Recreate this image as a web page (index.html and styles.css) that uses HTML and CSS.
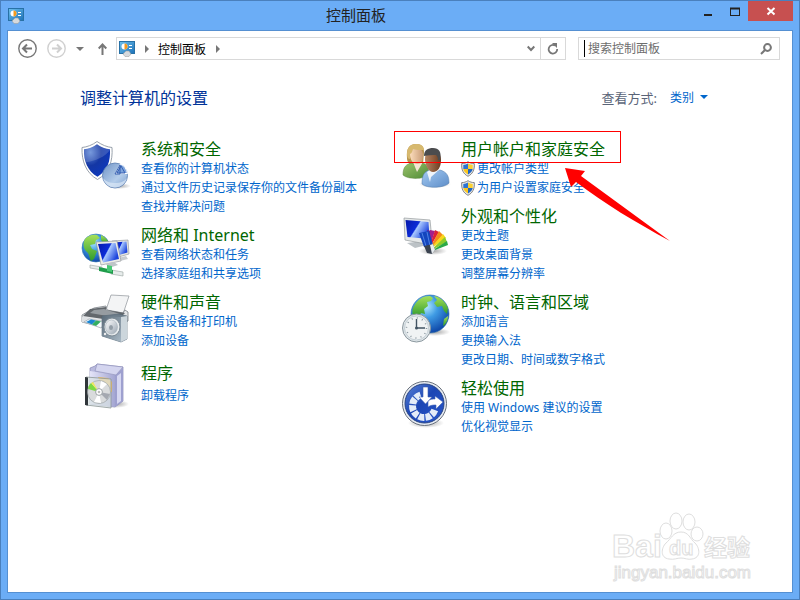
FILE: index.html
```html
<!DOCTYPE html>
<html lang="zh-CN">
<head>
  <meta charset="UTF-8">
  <title>控制面板</title>
  <meta name="viewport" content="width=device-width, initial-scale=1">
  <link rel="stylesheet" href="styles.css">
</head>
<body>
  <!-- shared gradients and symbols -->
  <svg class="defs" width="0" height="0" aria-hidden="true">
    <defs>
      <linearGradient id="silver" x1="0" y1="0" x2="1" y2="1"><stop offset="0" stop-color="#fff"/><stop offset="1" stop-color="#9aa6b2"/></linearGradient>
      <linearGradient id="blue" x1="0" y1="0" x2="1" y2="1"><stop offset="0" stop-color="#5c84d8"/><stop offset=".45" stop-color="#1c46b4"/><stop offset="1" stop-color="#2a58cc"/></linearGradient>
      <radialGradient id="guard" cx=".25" cy=".25" r=".9"><stop offset="0" stop-color="#5d86d6"/><stop offset=".45" stop-color="#1437a4"/><stop offset="1" stop-color="#0c38c0"/></radialGradient>
      <linearGradient id="screen" x1="0" y1="0" x2="1" y2=".5"><stop offset="0" stop-color="#0718a8"/><stop offset=".5" stop-color="#0c2bd8"/><stop offset=".55" stop-color="#a9c8ff"/><stop offset="1" stop-color="#1c44dc"/></linearGradient>
      <radialGradient id="globe" cx=".4" cy=".3" r=".75"><stop offset="0" stop-color="#b5ecff"/><stop offset=".4" stop-color="#3f9be4"/><stop offset="1" stop-color="#0a3fa2"/></radialGradient>
      <linearGradient id="land" x1="0" y1="0" x2="0" y2="1"><stop offset="0" stop-color="#a6e05a"/><stop offset="1" stop-color="#2f9b2d"/></linearGradient>
      <linearGradient id="pie" x1="0" y1="0" x2="1" y2="1"><stop offset="0" stop-color="#6f93c6"/><stop offset=".6" stop-color="#b4cdea"/><stop offset="1" stop-color="#7d9fce"/></linearGradient>
      <linearGradient id="steel" x1="0" y1="0" x2="1" y2="1"><stop offset="0" stop-color="#5a6b79"/><stop offset="1" stop-color="#a9b9c5"/></linearGradient>
      <linearGradient id="violet" x1="0" y1="0" x2="1" y2="0"><stop offset="0" stop-color="#e4e4f8"/><stop offset="1" stop-color="#a4a6d2"/></linearGradient>
      <linearGradient id="panel" x1="0" y1="0" x2="1" y2="1"><stop offset="0" stop-color="#6ec1ee"/><stop offset="1" stop-color="#1c71b8"/></linearGradient>
      <radialGradient id="shade"><stop offset="0" stop-color="#000" stop-opacity=".35"/><stop offset="1" stop-color="#000" stop-opacity="0"/></radialGradient>
    </defs>
    <symbol id="cp" viewBox="0 0 16 16">
      <rect x=".5" y=".5" width="15" height="12" fill="url(#panel)" stroke="#2871a6"/>
      <circle cx="5.500" cy="5.500" r="3" fill="#fff"/><path d="M5.500 5.500v-3a3 3 0 0 1 0 6z" fill="#f59a1d"/>
      <path d="M10 4.500h3M10 7.500h3" stroke="#fff"/>
      <path d="M4 13l3-3h3l2 3-2 2.500H6z" fill="#d6d9dc" stroke="#999" stroke-width=".5"/>
    </symbol>
    <symbol id="uac" viewBox="0 0 14 16">
      <path d="M7 .7C9 2 11 2.600 13.300 2.600 13.800 9 11.500 13 7 15.300 2.500 13 .2 9 .7 2.600 3 2.600 5 2 7 .7z" fill="#e8e8e8" stroke="#777" stroke-width=".9"/>
      <path d="M7 2.500C5.500 3.400 4 3.900 2.300 4v4H7z" fill="#2c74d4"/>
      <path d="M7 2.500C8.500 3.400 10 3.900 11.700 4v4H7z" fill="#fbd132"/>
      <path d="M2.300 8H7v5.600C4.300 12 2.700 10.300 2.300 8z" fill="#fbc61f"/>
      <path d="M11.700 8H7v5.600c2.700-1.600 4.300-3.300 4.700-5.600z" fill="#2266c2"/>
    </symbol>
  </svg>

  <div class="window">
    <header class="titlebar">
      <svg class="icon-16" aria-hidden="true"><use href="#cp"/></svg>
      <h1 class="title">控制面板</h1>
      <div class="controls">
        <button type="button" aria-label="最小化"><svg width="8" height="12"><path d="M0 10h8" stroke="#222" stroke-width="2"/></svg></button>
        <button type="button" aria-label="最大化"><svg width="10" height="12"><path d="M0 3.500h10" stroke="#222" stroke-width="2"/><rect x=".5" y="3.500" width="9" height="7" fill="none" stroke="#222"/></svg></button>
        <button type="button" class="close" aria-label="关闭"><svg width="10" height="12"><path d="M1.500 3l7 6.500m0-6.500l-7 6.500" stroke="#fff" stroke-width="2"/></svg></button>
      </div>
    </header>

    <main class="client">
      <nav class="toolbar">
        <button type="button" class="round" aria-label="后退"><svg width="19" height="19" fill="none" stroke="#777"><circle cx="9.500" cy="9.500" r="8.700" stroke-width="1.400"/><path d="M5.500 9.500H14M9 5.500l-4 4 4 4" stroke-width="2"/></svg></button>
        <button type="button" class="round" aria-label="前进"><svg width="19" height="19" fill="none" stroke="#d0d0d0"><circle cx="9.500" cy="9.500" r="8.700" stroke-width="1.400"/><path d="M13.500 9.500H5M10 5.500l4 4-4 4" stroke-width="2"/></svg></button>
        <button type="button" class="recent" aria-label="最近浏览的位置"><svg width="8" height="4"><path d="M0 0h8L4 4z" fill="#777"/></svg></button>
        <button type="button" class="up" aria-label="上移"><svg width="9" height="12" fill="none" stroke="#777" stroke-width="2"><path d="M4.500 12V1.500M.7 5.500l3.800-4 3.800 4"/></svg></button>
        <div class="address">
          <svg class="icon-16" aria-hidden="true"><use href="#cp"/></svg>
          <svg class="crumb" width="4" height="8"><path d="M0 0l4 4-4 4z" fill="#777"/></svg>
          <a href="#">控制面板</a>
          <svg class="crumb" width="4" height="8"><path d="M0 0l4 4-4 4z" fill="#777"/></svg>
          <button type="button" class="history" aria-label="以前的位置"><svg width="8" height="7" fill="none" stroke="#777" stroke-width="2"><path d="M.7 1.500L4 5l3.300-3.500"/></svg></button>
          <button type="button" class="refresh" aria-label="刷新"><svg width="12" height="12"><path d="M8 2.500A4.300 4.300 0 1 0 10.200 6" fill="none" stroke="#777" stroke-width="1.800"/><path d="M5 0h5v5z" fill="#777"/></svg></button>
        </div>
        <form class="search">
          <span class="cursor"></span>
          <input type="text" aria-label="搜索控制面板" placeholder="搜索控制面板">
          <button type="button" aria-label="搜索"><svg width="12" height="12" fill="none" stroke="#777" stroke-width="2"><circle cx="7.500" cy="4.500" r="3.400"/><path d="M5 7L1 11"/></svg></button>
        </form>
      </nav>

      <div class="heading">
        <h2>调整计算机的设置</h2>
        <span id="view-label">查看方式:</span>
        <button type="button" class="view" aria-describedby="view-label">类别 <svg width="8" height="4"><path d="M0 0h8L4 4z" fill="#0066cc"/></svg></button>
      </div>

      <div class="categories">
        <div class="column">
          <section class="category">
            <svg class="icon" viewBox="0 0 48 48" aria-hidden="true">
              <ellipse cx="38" cy="45" rx="12" ry="3" fill="url(#shade)"/>
              <path d="M16 .5C21 4 26 6 31 6.500 32 20 28 32 16.500 38.500 5 32 .5 20 1 6.500 6 6 11.500 4 16 .5z" fill="#fff" stroke="#8f97a3" stroke-width=".9"/>
              <path d="M16 3.200C20 6 24.500 8 29 8.300c.5 12-2.500 21.500-12.500 27.500C6.500 30 2.500 20 3 8.300 7.500 8 12 6 16 3.200z" fill="url(#guard)"/>
              <path d="M16 3.200C12 6 7.500 8 3 8.300c0 5 .5 9.300 2 13C14 20 24 16 29 9v-.7C24.500 8 20 6 16 3.200z" fill="#fff" opacity=".16"/>
              <circle cx="34" cy="34.500" r="12.500" fill="url(#pie)" stroke="#5b7db0" stroke-width=".8"/>
              <path d="M22 37c1 5 6 9.500 12 9.500S45 42 46 37c-3 4-7 5-12 5s-9-1-12-5z" fill="#dbe8f7" opacity=".7"/>
              <path d="M34.500 32.500l5-9.500c4 1.500 6 5 7 9.500z" fill="#7fa5dd" stroke="#fff" stroke-width="1"/>
              <path d="M34 33l5-9v9zM36 32l4-7 4 7z" fill="none" stroke="#2b56ac" stroke-width=".9"/>
            </svg>
            <div class="links">
              <h3><a href="#">系统和安全</a></h3>
              <a href="#">查看你的计算机状态</a>
              <a href="#">通过文件历史记录保存你的文件备份副本</a>
              <a href="#">查找并解决问题</a>
            </div>
          </section>

          <section class="category">
            <svg class="icon" viewBox="0 0 48 48" aria-hidden="true">
              <circle cx="15" cy="21" r="14" fill="url(#globe)" stroke="#3177ae" stroke-width=".6"/>
              <path d="M4 12c3-3 7-5 12-4l3 3-4 2-1 4-5 1 2 4 5 2-3 8-3 2c-2-3-1-6-4-9-3-2-5-7-2-13z" fill="url(#land)"/>
              <path d="M20 8c4 2 6 4 8 8l-5 1-3-4z" fill="url(#land)"/>
              <path d="M31 14l16-1 1 14-14 4z" fill="#e6e6e0" stroke="#8a8f96" stroke-width=".6"/>
              <path d="M32.500 15.500l13-1 1 11-12 3.500z" fill="url(#screen)"/>
              <path d="M37 31l8-2 2 3-8 2z" fill="#c8ccd0"/>
              <path d="M15 15l21-1 4 20-20 4z" fill="#ecece6" stroke="#8a8f96" stroke-width=".6"/>
              <path d="M17 17l17.500-1L38 32l-16 3.500z" fill="url(#screen)"/>
              <path d="M25 37l8-2 4 3-9 3z" fill="#bfc5c8"/>
              <path d="M9 38l12 2v3L9 41zM30 43l12 2v4l-12-2z" fill="#e7eceb" stroke="#97a3a0" stroke-width=".6"/>
              <path d="M18 40l14 3v4l-14-3z" fill="#1f9c4b"/><path d="M26 38l5 1v6l-5-1z" fill="#48c875"/>
            </svg>
            <div class="links">
              <h3><a href="#">网络和 Internet</a></h3>
              <a href="#">查看网络状态和任务</a>
              <a href="#">选择家庭组和共享选项</a>
            </div>
          </section>

          <section class="category">
            <svg class="icon" viewBox="0 0 48 48" aria-hidden="true">
              <path d="M30 1l18 1-6 18-17-4z" fill="#f3f4f5" stroke="#9ba0a4" stroke-width=".8"/>
              <path d="M13 14l12-2 1 4 16 3 2-3 3 2v9L25 34 1 28v-7z" fill="#e4e6e8" stroke="#777e84" stroke-width=".8"/>
              <path d="M9 15l16-2v3l19 3-8 8L2 22z" fill="#62676c"/>
              <path d="M13 16l10-1 16 5-7 3-23-4z" fill="#969ca1"/>
              <path d="M1 23l29 4-8 7-21-6z" fill="#dfe2e5"/>
              <path d="M3 28l5-3 17 3-5 6z" fill="#f7fbff" stroke="#8d979f" stroke-width=".6"/>
              <path d="M5 28l5-2.500 5 1-4 4z" fill="#1b86d2"/><path d="M11 30.500l4-4 5 1-5 4.500z" fill="#33ad62"/>
              <path d="M21 22l17-2 8 2v23l-6 3-19-6z" fill="#6d7d8a" stroke="#526473" stroke-width=".6"/>
              <path d="M21 22l19 1v25l-19-6z" fill="url(#steel)"/><path d="M40 23l6-1v23l-6 3z" fill="#ccd6dc"/>
              <ellipse cx="31" cy="33" rx="8" ry="9" fill="#e9edef" stroke="#7f8c96"/>
              <ellipse cx="30.500" cy="33" rx="6" ry="7" fill="url(#silver)" stroke="#a6b2ba" stroke-width=".6"/>
              <ellipse cx="30" cy="33.500" rx="2" ry="2.500" fill="#929da6"/>
              <circle cx="24" cy="40" r="1.200" fill="#eee"/>
            </svg>
            <div class="links">
              <h3><a href="#">硬件和声音</a></h3>
              <a href="#">查看设备和打印机</a>
              <a href="#">添加设备</a>
            </div>
          </section>

          <section class="category">
            <svg class="icon" viewBox="0 0 48 48" aria-hidden="true">
              <ellipse cx="35" cy="43" rx="13" ry="4" fill="url(#shade)"/>
              <path d="M9 7l5-2 2-2 26 3v34l-8 6-25-3z" fill="#b9bade" stroke="#8788b4" stroke-width=".7"/>
              <path d="M9 10l25 4v32L9 43z" fill="url(#violet)"/><path d="M34 14l8-7v33l-8 6z" fill="#9ea0cf"/>
              <path d="M36 15l4-3v28l-4 3z" fill="#d6d7f1"/>
              <path d="M16 3l26 3-7 8-21-4z" fill="#d4d5ef" stroke="#9495bd" stroke-width=".7"/>
              <path d="M17 16l10 1 4 4v10l-8 1z" fill="#f3c05f"/>
              <path d="M5 16l25 2v29L5 44z" fill="#d9e3e2" fill-opacity=".7" stroke="#8b9696" stroke-width=".8"/>
              <path d="M4 16l3 .500v28L4 44z" fill="#30363a"/>
              <circle cx="18" cy="31" r="11.500" fill="#d9dbdc" stroke="#929a9d" stroke-width=".6"/>
              <path d="M18 31L7 28c0-3 2-5 3-6z" fill="#7cda45"/><path d="M18 31l-8-9 2-1z" fill="#f0e85c"/>
              <path d="M18 31l2-11 6 3zM18 31l-5 10 7 1z" fill="#fff"/><path d="M18 31l11 2-3 6z" fill="#a4a8b0"/>
              <circle cx="18" cy="31" r="3.400" fill="#fff" stroke="#9ba1a4"/><circle cx="18" cy="31" r="1.300" fill="#bbb"/>
            </svg>
            <div class="links">
              <h3><a href="#">程序</a></h3>
              <a href="#">卸载程序</a>
            </div>
          </section>
        </div>

        <div class="column">
          <section class="category">
            <svg class="icon" viewBox="0 0 48 48" aria-hidden="true">
              <defs>
                <linearGradient id="green" x1="0" y1="0" x2="1" y2="1"><stop offset="0" stop-color="#9cc46c"/><stop offset="1" stop-color="#4f8b36"/></linearGradient>
                <linearGradient id="shirt" x1="0" y1="0" x2="1" y2="1"><stop offset="0" stop-color="#a4caf2"/><stop offset="1" stop-color="#5d8dc8"/></linearGradient>
                <linearGradient id="fair" x1="0" y1="0" x2="1" y2="0"><stop offset="0" stop-color="#fbdcbb"/><stop offset="1" stop-color="#c99c77"/></linearGradient>
                <linearGradient id="tan" x1="0" y1="0" x2="1" y2="0"><stop offset="0" stop-color="#b58563"/><stop offset="1" stop-color="#6b3c20"/></linearGradient>
              </defs>
              <ellipse cx="34" cy="43" rx="16" ry="4" fill="url(#shade)"/>
              <path d="M6 17C5 8 8 3 15 3c6 0 8 3 8 8l-1 12-10 1C7 23 6 20 6 17z" fill="#b8934d"/>
              <path d="M2 34c0-8 3-11 9-12l5 3 6-3c5 2 6 6 6 12-4 4-21 5-26 0z" fill="url(#green)" stroke="#5a843d" stroke-width=".5"/>
              <path d="M12 21l4 10 6-10z" fill="#f3e5d2"/>
              <path d="M9 13c0-4 2-6 6-6s7 2 7 7c0 6-2 9-6 9s-7-4-7-10z" fill="url(#fair)"/>
              <path d="M6 13c0-7 4-10 9-10 5 0 8 2 8 6-5 0-8 0-11-1-1 3-1 4-3 5v5c-2 0-3-2-3-5z" fill="#d7b96f"/>
              <path d="M21 43c0-9 2-13 9-14l4 2 5-2c7 2 9 6 9 13-4 5-22 6-27 1z" fill="url(#shirt)" stroke="#4e78a8" stroke-width=".5"/>
              <path d="M26 31l3 10 1-5 8-7-8-1z" fill="#eef4fa"/>
              <path d="M24 18c0-6 3-8 8-8s8 3 8 9c0 7-3 12-8 12-4 0-8-6-8-13z" fill="url(#tan)"/>
              <path d="M23 15c0-6 4-8 9-8 6 0 9 4 7 12h-2c0-3-1-4-2-5-4 0-8 0-12 1z" fill="#4b4c4e"/>
            </svg>
            <div class="links">
              <h3><a href="#">用户帐户和家庭安全</a></h3>
              <a href="#" class="admin"><svg width="14" height="16" aria-hidden="true"><use href="#uac"/></svg>更改帐户类型</a>
              <a href="#" class="admin"><svg width="14" height="16" aria-hidden="true"><use href="#uac"/></svg>为用户设置家庭安全</a>
            </div>
            <div class="highlight"></div>
            <svg class="arrow" width="106" height="75" viewBox="0 0 106 75" aria-hidden="true"><path d="M0 0l20 3-4 5 89 65C70 54 40 36 11 14l-5 5z" fill="#f00"/></svg>
          </section>

          <section class="category">
            <svg class="icon" viewBox="0 0 48 48" aria-hidden="true">
              <ellipse cx="32" cy="43" rx="14" ry="4" fill="url(#shade)"/>
              <path d="M6 35l16-2 4 4-12 3z" fill="#bcc2c6"/>
              <path d="M3 10l26 2 2 20-6 4-21-4z" fill="#e5e8e8" stroke="#959b9e" stroke-width=".7"/>
              <path d="M4.500 12l23 2 1 17-22-2z" fill="url(#screen)"/>
              <path d="M28 40l-2-18 4 1z" fill="#731f8d"/>
              <path d="M28 41l1-19 5 1z" fill="#a31f8b"/><path d="M28 41l6-19 4 2z" fill="#dd2038"/>
              <path d="M28 42l10-19 4 4z" fill="#f5891b"/><path d="M28 42l14-16 3 4z" fill="#f7d61c"/>
              <path d="M29 43l15-14 2 5z" fill="#8dcc2b"/><path d="M29 44l17-11 1 4z" fill="#2ca948"/>
              <path d="M18 25l10-2 4 14-9 2z" fill="#1445bd"/><path d="M21 25l4 13m1-14l3 14" stroke="#5c92f0" stroke-width=".8"/>
              <path d="M23 38l9-2 2 6-3 4-5-1z" fill="#3b4350"/><path d="M29 37l3-1 2 6-3 4z" fill="#e9eef1"/>
            </svg>
            <div class="links">
              <h3><a href="#">外观和个性化</a></h3>
              <a href="#">更改主题</a>
              <a href="#">更改桌面背景</a>
              <a href="#">调整屏幕分辨率</a>
            </div>
          </section>

          <section class="category">
            <svg class="icon" viewBox="0 0 48 48" aria-hidden="true">
              <ellipse cx="34" cy="38" rx="15" ry="4" fill="url(#shade)"/>
              <circle cx="29" cy="20" r="19" fill="url(#globe)" stroke="#2769a8" stroke-width=".6"/>
              <path d="M13 12c4-7 9-10 16-10l3 2-2 3-4 1 1 4-4 3 1 5-4-1-2 4-6-1c-1-4-1-7 1-10z" fill="url(#land)"/>
              <path d="M33 2c6 1 11 5 14 12l-1 6-3-3-2-5-5 1-3-4 3-3z" fill="url(#land)"/>
              <path d="M43 25l4-3c0 5-3 9-5 10z" fill="url(#land)"/>
              <circle cx="15.500" cy="34" r="14" fill="#dfe5e8" stroke="#8c989f"/>
              <circle cx="15.500" cy="34" r="12" fill="#f0f3f4" stroke="#bac7ce" stroke-width=".8"/>
              <circle cx="15.500" cy="34" r="10" fill="none" stroke="#8a979f" stroke-width="1.500" stroke-dasharray="1 4.236"/>
              <path d="M15.500 25v9H24" fill="none" stroke="#425463" stroke-width="1.400"/><circle cx="15.500" cy="34" r="1.500" fill="#425463"/>
            </svg>
            <div class="links">
              <h3><a href="#">时钟、语言和区域</a></h3>
              <a href="#">添加语言</a>
              <a href="#">更换输入法</a>
              <a href="#">更改日期、时间或数字格式</a>
            </div>
          </section>

          <section class="category">
            <svg class="icon" viewBox="0 0 48 48" aria-hidden="true">
              <ellipse cx="25" cy="43" rx="18" ry="5" fill="url(#shade)"/>
              <circle cx="23.500" cy="23.500" r="22" fill="#e8ecf2" stroke="#69717d"/>
              <circle cx="23.500" cy="23.500" r="19.500" fill="url(#blue)" stroke="#284484"/>
              <path d="M33.800 30A11.500 11.500 0 1 1 20 14.900" fill="none" stroke="#e4ecf8" stroke-width="7" stroke-dasharray="5.600 1.140"/>
              <path d="M27 21c2-2 5-2 7-2v-3l8 6-7 7v-4c-3 0-5 0-8 2z" fill="#fff" stroke="#3f62b4" stroke-width=".6"/>
              <path d="M22 7h5v10h4l-6.500 7-6.500-7h4z" fill="#fff" stroke="#3f62b4" stroke-width=".6"/>
            </svg>
            <div class="links">
              <h3><a href="#">轻松使用</a></h3>
              <a href="#">使用 Windows 建议的设置</a>
              <a href="#">优化视觉显示</a>
            </div>
          </section>
        </div>
      </div>

      <svg class="watermark" width="146" height="74" viewBox="0 0 146 74" fill="#fff" stroke="#dedede">
        <text class="brand" x="1" y="45">Bai</text>
        <ellipse cx="55" cy="19" rx="6" ry="8"/><ellipse cx="65" cy="9" rx="6" ry="8"/>
        <ellipse cx="78" cy="10" rx="6" ry="8"/><ellipse cx="86" cy="22" rx="6" ry="7"/>
        <path d="M70 20c8 0 9 7 14 11 5 5 6 15-3 16-4 1-7-1-11-1s-7 2-12 1c-9-1-8-11-3-16 5-4 7-11 15-11z"/>
        <text class="du" x="58" y="43">du</text>
        <text class="brand-cn" x="93" y="44">经验</text>
        <text class="url" x="3" y="66">jingyan.baidu.com</text>
      </svg>
    </main>
  </div>
</body>
</html>
```

FILE: styles.css
```css
* {
  box-sizing: border-box;
}
body {
  margin: 0;
  font-family: "Noto Sans", "Noto Sans CJK SC", sans-serif;
  font-size: 12px;
  color: #000;
}
h1, h2, h3 {
  margin: 0;
  font-weight: normal;
}
a {
  color: #0066cc;
  text-decoration: none;
}
a:hover {
  text-decoration: underline;
}
button {
  display: flex;
  align-items: center;
  justify-content: center;
  padding: 0;
  border: 0;
  background: none;
  font: inherit;
}
svg {
  display: block;
  flex: none;
}
.defs {
  position: absolute;
}
.icon-16 {
  width: 16px;
  height: 16px;
}

/* window frame */
.window {
  display: flex;
  flex-direction: column;
  min-height: 100vh;
  padding: 0 7px 7px;
  border: 1px solid #4a80bd;
  background: #6badf6;
}
.titlebar {
  display: flex;
  height: 29px;
}
.titlebar .icon-16 {
  margin-top: 7px;
}
.title {
  flex: 1;
  margin-right: 6px;
  font-size: 15px;
  line-height: 29px;
  text-align: center;
  color: #222;
}
.controls {
  display: flex;
  height: 20px;
  margin-right: -1px;
}
.controls button {
  width: 27px;
}
.controls .close {
  width: 45px;
  background: #c75050;
}
.client {
  position: relative;
  flex: 1;
  border: 1px solid #5590d2;
  margin: 0 -1px -1px;
  background: #fff;
}

/* navigation */
.toolbar {
  display: flex;
  align-items: center;
  padding: 6px 12px 0 10px;
}
.round {
  margin-right: 10px;
}
.recent {
  width: 16px;
  margin-left: -4px;
}
.up {
  width: 28px;
}
.address {
  display: flex;
  flex: 1;
  align-items: center;
  height: 23px;
  padding-left: 2px;
  border: 1px solid #d9d9d9;
}
.address a {
  color: #000;
}
.crumb {
  margin: 0 9px 0 10px;
}
.history {
  width: 19px;
  height: 21px;
  margin-left: auto;
}
.refresh {
  width: 25px;
  height: 21px;
  border-left: 1px solid #d9d9d9;
}
.search {
  display: flex;
  align-items: center;
  width: 202px;
  height: 23px;
  margin-left: 12px;
  padding: 0 7px 0 5px;
  border: 1px solid #d9d9d9;
}
.cursor {
  width: 1px;
  height: 17px;
  background: #000;
}
.search input {
  flex: 1;
  min-width: 0;
  padding: 0 3px;
  border: 0;
  outline: 0;
  background: none;
  font: inherit;
}
.search input::placeholder {
  color: #6d6d6d;
  opacity: 1;
}

/* page heading */
.heading {
  display: flex;
  align-items: center;
  height: 24px;
  margin: 25px 84px 0 72px;
  font-size: 13px;
  color: #5a6478;
}
.heading h2 {
  flex: 1;
  font-size: 16px;
  color: #003399;
}
.view {
  gap: 6px;
  margin-left: 13px;
  font-size: 12px;
  color: #0066cc;
}

/* categories */
.categories {
  display: grid;
  grid-template-columns: 1fr 1fr;
  padding: 30px 71px 30px 73px;
}
.column {
  display: flex;
  flex-direction: column;
  gap: 9px;
}
.category {
  position: relative;
  display: flex;
  gap: 12px;
}
.icon {
  width: 48px;
  height: 48px;
  margin-top: 2px;
  overflow: visible;
}
.links {
  display: flex;
  flex-direction: column;
  justify-content: space-evenly;
  align-items: flex-start;
  line-height: 19px;
}
.links h3 {
  font-size: 16px;
  line-height: 20px;
}
.links h3 a {
  color: #006600;
}
.admin {
  display: flex;
  align-items: center;
  gap: 2px;
}

/* callout over the user accounts category */
.highlight {
  position: absolute;
  top: -8px;
  left: -7px;
  width: 227px;
  height: 32px;
  border: 1px solid #f00;
}
.arrow {
  position: absolute;
  top: 29px;
  left: 164px;
}

.watermark {
  position: absolute;
  right: 35px;
  bottom: 6px;
}
.watermark .brand {
  font: bold 32px "Liberation Sans", sans-serif;
}
.watermark .du {
  font: bold 20px "Liberation Sans", sans-serif;
}
.watermark .brand-cn {
  font: bold 23px "Noto Sans CJK SC", sans-serif;
}
.watermark .url {
  font: 17px "Liberation Sans", sans-serif;
}
```
